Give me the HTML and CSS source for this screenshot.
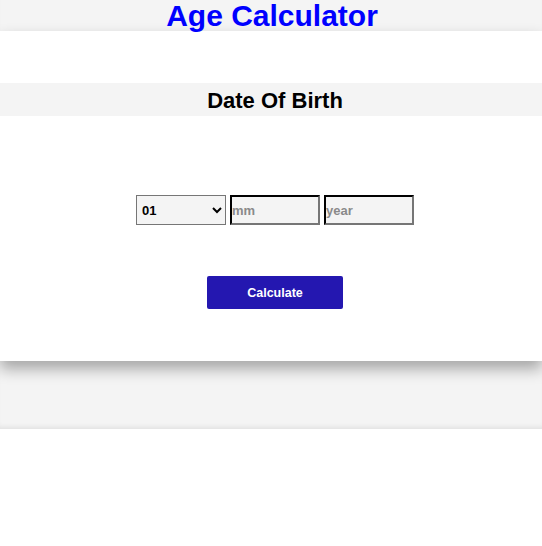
FILE: index.html
```html
<!DOCTYPE html>
<html>
<head>
<meta charset="utf-8">
<link rel="stylesheet" href="styles.css">
</head>
<body>
<div class="page">
  <h1 class="title">Age Calculator</h1>
  <div class="card">
    <h2 class="band">Date Of Birth</h2>
    <div class="fields">
      <select class="sel">
        <option>01</option>
        <option>02</option>
      </select>
      <input class="inp" type="text" placeholder="mm">
      <input class="inp" type="text" placeholder="year">
    </div>
    <div class="actions">
      <button class="btn">Calculate</button>
    </div>
  </div>
</div>
</body>
</html>
```
FILE: styles.css
```css
html, body {
  margin: 0;
  padding: 0;
  background: #ffffff;
  font-family: "Liberation Sans", Arial, sans-serif;
}
.page {
  background: #f4f4f4;
  padding-bottom: 68px;
  box-shadow: inset 0 -5px 5px -3px rgba(0,0,0,0.08);
}
.title {
  margin: 0;
  font-size: 30px;
  line-height: 31px;
  padding: 0 0 0 2px;
  font-weight: 700;
  color: #0000ff;
  text-align: center;
}
.card {
  background: #ffffff;
  box-shadow: 0 8px 14px rgba(0,0,0,0.32);
  padding: 52px 0 52px;
}
.band {
  margin: 0;
  background: #f4f4f4;
  height: 33px;
  line-height: 33px;
  padding: 1px 0 0 8px;
  box-sizing: border-box;
  font-size: 22px;
  font-weight: 700;
  color: #000;
  text-align: center;
}
.fields {
  display: flex;
  justify-content: center;
  gap: 4px;
  padding-left: 8px;
  margin-top: 79px;
}
.sel {
  width: 90px;
  height: 30px;
  box-sizing: border-box;
  border: 1px solid #767676;
  background: #f4f4f4;
  font-family: "Liberation Sans", Arial, sans-serif;
  font-weight: 700;
  font-size: 13px;
  color: #000;
  padding-left: 1px;
  border-radius: 0;
}
.inp {
  width: 90px;
  height: 30px;
  box-sizing: border-box;
  border: 2px inset #767676;
  border-top-color: #333;
  border-left-color: #333;
  background: #f4f4f4;
  font-family: "Liberation Sans", Arial, sans-serif;
  font-weight: 700;
  font-size: 13px;
  padding: 0;
  margin: 0;
}
.inp::placeholder {
  color: #8a8a8a;
}
.actions {
  display: flex;
  justify-content: center;
  padding-left: 8px;
  margin-top: 51px;
}
.btn {
  width: 136px;
  height: 33px;
  border: none;
  border-radius: 2px;
  background: #2417b0;
  color: #fff;
  font-family: "Liberation Sans", Arial, sans-serif;
  font-weight: 700;
  font-size: 12.5px;
}
```
